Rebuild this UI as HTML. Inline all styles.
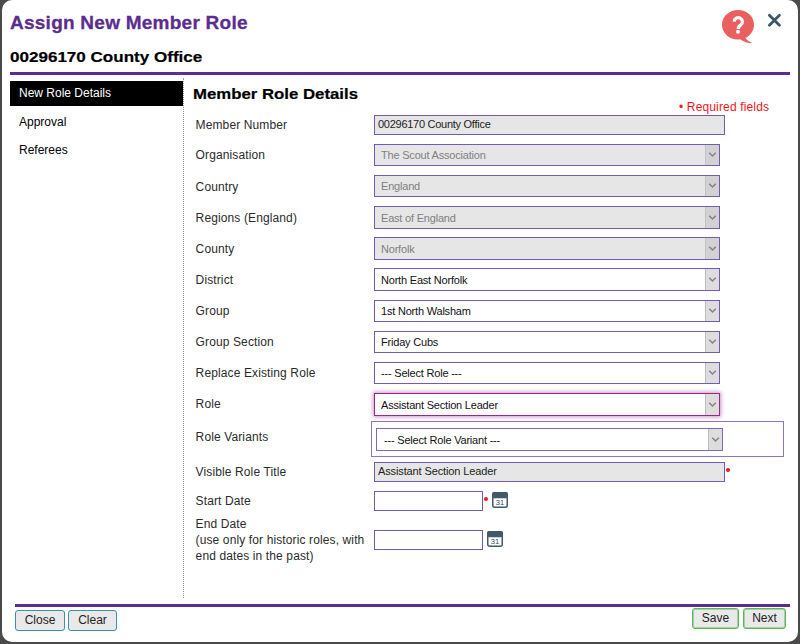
<!DOCTYPE html>
<html><head><meta charset="utf-8">
<style>
*{margin:0;padding:0;box-sizing:border-box}
html,body{width:800px;height:644px;overflow:hidden;background:#4a4a4a;font-family:"Liberation Sans",sans-serif}
#dlg{position:absolute;left:2px;top:0;width:796px;height:642px;background:#fff;border-radius:10px}
.abs{position:absolute;white-space:nowrap}
.title{left:10px;top:11.5px;-webkit-text-stroke:0.3px #5b2d91;font-size:19px;font-weight:bold;color:#5b2d91;line-height:22px;letter-spacing:0.25px}
.sub{left:10px;top:47.8px;-webkit-text-stroke:0.2px #000;font-size:15px;font-weight:bold;color:#000;line-height:18px;transform:scaleX(1.136);transform-origin:0 0}
.hr{position:absolute;height:3px;background:#5b2d91}
.nav{left:10px;width:173px;height:25px;font-size:12px;line-height:25px;padding-left:9px;color:#000}
.nav.on{background:#000;color:#fff}
.sep{position:absolute;left:183px;top:78px;width:1px;height:520px;border-left:1px dotted #999}
.h2{left:193px;top:85.3px;-webkit-text-stroke:0.2px #000;font-size:15px;font-weight:bold;color:#000;line-height:18px;transform:scaleX(1.118);transform-origin:0 0}
.req{left:679px;top:100px;font-size:12px;color:#f5141e;line-height:14px;letter-spacing:0.15px}
.lbl{left:195.6px;font-size:12px;color:#2b2b2b;line-height:14px;letter-spacing:0.12px}
.inp{position:absolute;left:374px;width:351px;height:20px;border:1px solid #7659b0;background:#e6e6e6;font-size:11px;letter-spacing:-0.27px;line-height:17px;padding-left:3px;color:#222;white-space:nowrap}
.sel{position:absolute;left:374px;width:346px;height:22px;border:1px solid #7659b0;background:#fff;font-size:11px;letter-spacing:-0.2px;line-height:20px;padding-left:6px;color:#111;white-space:nowrap}
.sel.dis{background:#e6e6e6;color:#808080}
.sel .btn{position:absolute;right:0;top:0;width:14px;height:100%;background:#dddddd;border-left:1px solid #bdbdbd}
.sel.dis .btn{background:#d2d2d2;border-left-color:#c4c4c4}
.sel .btn svg{position:absolute;left:1.5px;top:50%;margin-top:-4px}
.sel.focus{border-color:#962a8c;box-shadow:0 0 4px 1px rgba(150,42,140,0.5)}
.date{position:absolute;left:374px;width:109px;height:20px;border:1px solid #7659b0;background:#fff}
.cal{position:absolute;width:16px;height:16px}
.dot{position:absolute;width:4px;height:4px;border-radius:2px;background:#f5141e}
.button{position:absolute;height:21px;border:1px solid #3a8fb7;border-radius:3px;background:#e9e9e9;font-size:12px;line-height:18px;text-align:center;color:#222}
.button.g{border:1px solid #5cb65c;box-shadow:inset 0 0 0 1px rgba(100,185,100,0.5);line-height:19px}
</style></head><body>
<div id="dlg"></div>
<div class="abs title">Assign New Member Role</div>
<div class="abs sub">00296170 County Office</div>
<div class="hr" style="left:10px;top:72px;width:780px"></div>
<div class="abs nav on" style="top:81px">New Role Details</div>
<div class="abs nav" style="top:110px">Approval</div>
<div class="abs nav" style="top:138px">Referees</div>
<div class="sep"></div>
<div class="abs h2">Member Role Details</div>
<div class="abs req">• Required fields</div>
<div class="abs lbl" style="top:118.3px">Member Number</div>
<div class="abs lbl" style="top:148.2px">Organisation</div>
<div class="abs lbl" style="top:179.6px">Country</div>
<div class="abs lbl" style="top:210.6px">Regions (England)</div>
<div class="abs lbl" style="top:241.6px">County</div>
<div class="abs lbl" style="top:272.6px">District</div>
<div class="abs lbl" style="top:303.6px">Group</div>
<div class="abs lbl" style="top:334.6px">Group Section</div>
<div class="abs lbl" style="top:365.6px">Replace Existing Role</div>
<div class="abs lbl" style="top:396.6px">Role</div>
<div class="abs lbl" style="top:429.6px">Role Variants</div>
<div class="abs lbl" style="top:464.9px">Visible Role Title</div>
<div class="abs lbl" style="top:494.0px">Start Date</div>
<div class="abs lbl" style="top:516.3px;line-height:16px">End Date<br>(use only for historic roles, with<br>end dates in the past)</div>
<div class="inp" style="top:115px">00296170 County Office</div>
<div class="sel dis" style="top:144px;height:22px;line-height:19px;padding-top:1px">The Scout Association<div class="btn"><svg width="9" height="7" viewBox="0 0 9 7"><path d="M1.2 1.8 L4.5 5 L7.8 1.8" fill="none" stroke="#858585" stroke-width="1.6"/></svg></div></div>
<div class="sel dis" style="top:175px;height:22px;line-height:19px;padding-top:1px">England<div class="btn"><svg width="9" height="7" viewBox="0 0 9 7"><path d="M1.2 1.8 L4.5 5 L7.8 1.8" fill="none" stroke="#858585" stroke-width="1.6"/></svg></div></div>
<div class="sel dis" style="top:206px;height:23px;line-height:20px;padding-top:1px">East of England<div class="btn"><svg width="9" height="7" viewBox="0 0 9 7"><path d="M1.2 1.8 L4.5 5 L7.8 1.8" fill="none" stroke="#858585" stroke-width="1.6"/></svg></div></div>
<div class="sel dis" style="top:237px;height:23px;line-height:20px;padding-top:1px">Norfolk<div class="btn"><svg width="9" height="7" viewBox="0 0 9 7"><path d="M1.2 1.8 L4.5 5 L7.8 1.8" fill="none" stroke="#858585" stroke-width="1.6"/></svg></div></div>
<div class="sel" style="top:268px;height:23px;line-height:20px;padding-top:1px">North East Norfolk<div class="btn"><svg width="9" height="7" viewBox="0 0 9 7"><path d="M1.2 1.8 L4.5 5 L7.8 1.8" fill="none" stroke="#858585" stroke-width="1.6"/></svg></div></div>
<div class="sel" style="top:300px;height:22px;line-height:19px;padding-top:1px">1st North Walsham<div class="btn"><svg width="9" height="7" viewBox="0 0 9 7"><path d="M1.2 1.8 L4.5 5 L7.8 1.8" fill="none" stroke="#858585" stroke-width="1.6"/></svg></div></div>
<div class="sel" style="top:331px;height:22px;line-height:19px;padding-top:1px">Friday Cubs<div class="btn"><svg width="9" height="7" viewBox="0 0 9 7"><path d="M1.2 1.8 L4.5 5 L7.8 1.8" fill="none" stroke="#858585" stroke-width="1.6"/></svg></div></div>
<div class="sel" style="top:362px;height:22px;line-height:19px;padding-top:1px">--- Select Role ---<div class="btn"><svg width="9" height="7" viewBox="0 0 9 7"><path d="M1.2 1.8 L4.5 5 L7.8 1.8" fill="none" stroke="#858585" stroke-width="1.6"/></svg></div></div>
<div class="sel focus" style="top:393px;height:23px;line-height:20px;padding-top:1px">Assistant Section Leader<div class="btn"><svg width="9" height="7" viewBox="0 0 9 7"><path d="M1.2 1.8 L4.5 5 L7.8 1.8" fill="none" stroke="#858585" stroke-width="1.6"/></svg></div></div>
<div style="position:absolute;left:371px;top:421px;width:413px;height:36px;border:1px solid #8c74c2"></div>
<div class="sel" style="top:428px;left:376px;width:347px;height:23px;line-height:20px;padding-top:1px;padding-left:7px;border-color:#8068b8">--- Select Role Variant ---<div class="btn"><svg width="9" height="7" viewBox="0 0 9 7"><path d="M1.2 1.8 L4.5 5 L7.8 1.8" fill="none" stroke="#858585" stroke-width="1.6"/></svg></div></div>
<div class="inp" style="top:462px;letter-spacing:-0.12px;padding-left:3px">Assistant Section Leader</div>
<div class="dot" style="left:726px;top:468px"></div>
<div class="date" style="top:491px"></div>
<div class="dot" style="left:483.7px;top:496.6px"></div>
<div class="cal" style="left:491.5px;top:492px"><svg width="16" height="16" viewBox="0 0 16 16"><rect x="0.75" y="0.75" width="14.5" height="14.5" rx="2" fill="#fff" stroke="#41596a" stroke-width="1.5"/><rect x="0" y="0" width="16" height="6.3" rx="2" fill="#41596a"/><text x="8" y="13" font-family="Liberation Sans" font-size="7.5" text-anchor="middle" fill="#33495a">31</text></svg></div>
<div class="date" style="top:530px"></div>
<div class="cal" style="left:487px;top:531px"><svg width="16" height="16" viewBox="0 0 16 16"><rect x="0.75" y="0.75" width="14.5" height="14.5" rx="2" fill="#fff" stroke="#41596a" stroke-width="1.5"/><rect x="0" y="0" width="16" height="6.3" rx="2" fill="#41596a"/><text x="8" y="13" font-family="Liberation Sans" font-size="7.5" text-anchor="middle" fill="#33495a">31</text></svg></div>
<div class="hr" style="left:15px;top:604px;width:775px"></div>
<div class="button" style="left:15px;top:610px;width:50px">Close</div>
<div class="button" style="left:68px;top:610px;width:49px">Clear</div>
<div class="button g" style="left:692px;top:608px;width:47px">Save</div>
<div class="button g" style="left:743px;top:608px;width:43px">Next</div>
<svg class="abs" style="left:716px;top:5px" width="44" height="44" viewBox="0 0 44 44"><ellipse cx="22" cy="19.8" rx="16" ry="14.8" fill="#e8605f"/><path d="M28 31 Q31 36 35.5 37.5 Q36 38 34.5 38.2 Q29 38 24 34 Z" fill="#e8605f"/><path d="M18.2 16.6 A4.1 4.1 0 1 1 24.6 20.1 Q22.2 21.6 22.2 24" fill="none" stroke="#fff" stroke-width="3.3"/><circle cx="22" cy="26.8" r="2" fill="#fff"/></svg>
<svg class="abs" style="left:762px;top:8px" width="24" height="24" viewBox="0 0 24 24"><path d="M7.4 7.2 L17.4 17.2 M17.4 7.2 L7.4 17.2" stroke="#3e5666" stroke-width="2.8" stroke-linecap="round"/></svg>
</body></html>
